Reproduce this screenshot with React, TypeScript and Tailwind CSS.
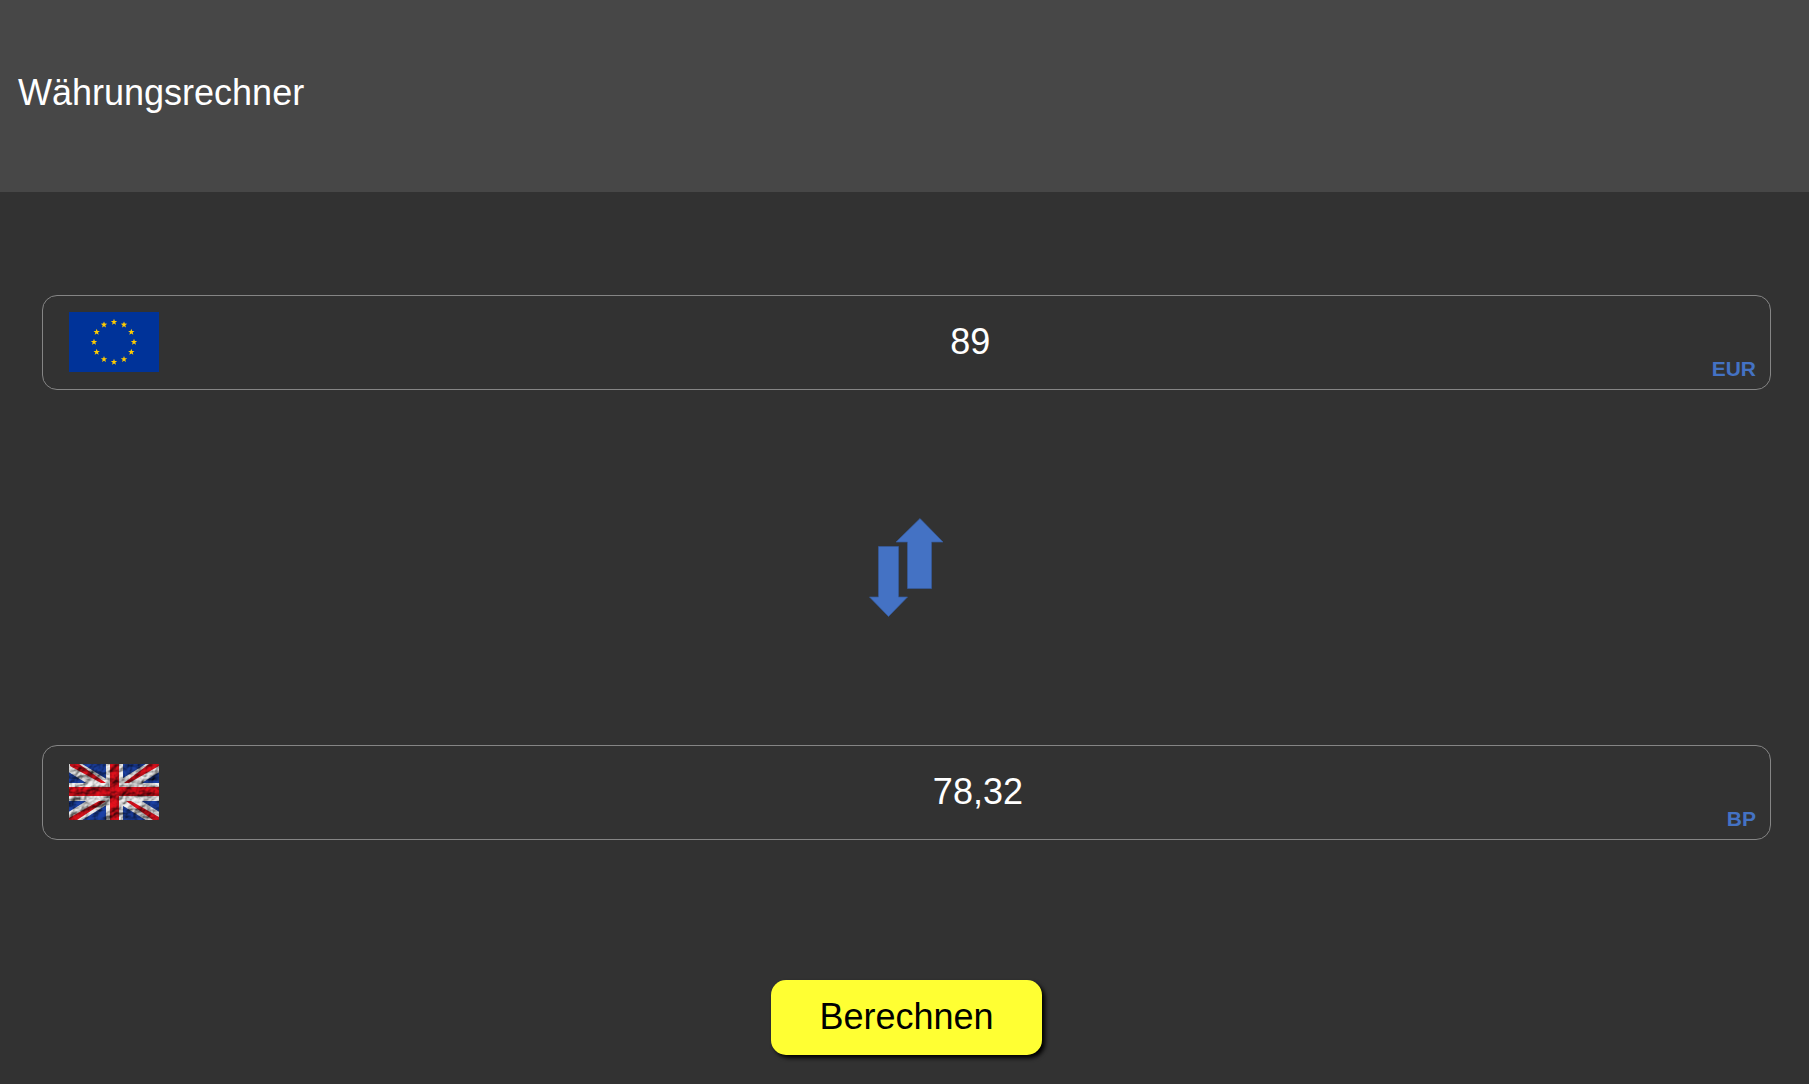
import { useState, type ReactNode } from "react";

const STAR = "0,-3.2 0.85,-1.1 3.2,-1.05 1.3,0.45 2,2.75 0,1.45 -2,2.75 -1.3,0.45 -3.2,-1.05 -0.85,-1.1";

function EuFlag() {
  return (
    <svg viewBox="0 0 90 60" className="h-[60px] w-[90px] shrink-0" role="img" aria-label="Europäische Union">
      <rect width="90" height="60" fill="#003399" />
      {Array.from({ length: 12 }, (_, i) => {
        const a = (i * Math.PI) / 6;
        return (
          <polygon
            key={i}
            points={STAR}
            fill="#ffcc00"
            transform={`translate(${45 + 20 * Math.sin(a)} ${30 - 20 * Math.cos(a)})`}
          />
        );
      })}
    </svg>
  );
}

function UkFlag() {
  return (
    <svg viewBox="0 0 90 56" className="h-14 w-[90px] shrink-0" role="img" aria-label="Vereinigtes Königreich">
      <defs>
        <filter id="crumple" x="0" y="0" width="100%" height="100%" colorInterpolationFilters="sRGB">
          <feTurbulence type="fractalNoise" baseFrequency="0.09 0.1" numOctaves="4" seed="8" result="noise" />
          <feDiffuseLighting in="noise" surfaceScale="3.6" lightingColor="#ffffff" diffuseConstant="1" result="light">
            <feDistantLight azimuth="235" elevation="52" />
          </feDiffuseLighting>
          <feBlend in="SourceGraphic" in2="light" mode="multiply" />
        </filter>
      </defs>
      <g filter="url(#crumple)">
        <rect width="90" height="56" fill="#1c42a8" />
        <path d="M0 0L90 56M90 0L0 56" stroke="#f2f2f2" strokeWidth="14" />
        <path d="M1 0h9L37 19h-5L1 2zM80 0h10v2L60 19h-5zM0 54L30 37h7L8 56H0zM90 56h-6L57 37h5L90 53z" fill="#e0101c" />
        <path d="M37 0h17v19h36v18H54v19H37V37H0V19h37z" fill="#f5f5f5" />
        <path d="M41 0h9v23h40v9H50v24h-9V32H0v-9h41z" fill="#e8101c" />
      </g>
    </svg>
  );
}

function SwapArrows() {
  return (
    <svg viewBox="0 0 75 99" className="h-[99px] w-[75px]" fill="#4472c4" stroke="#365b9d" strokeWidth="0.7" aria-hidden="true">
      <path d="M51 .5L74 24H62.500v46.500H38.500V24H27z" />
      <path d="M9.500 28.500h20V79h9L19.500 98.500.5 79h9z" />
    </svg>
  );
}

type FieldProps = {
  id: string;
  flag: ReactNode;
  currency: string;
  value: string;
  readOnly?: boolean;
  onChange?: (value: string) => void;
};

function CurrencyField({ id, flag, currency, value, readOnly, onChange }: FieldProps) {
  return (
    <div className="flex h-[95px] w-full items-center rounded-[15px] border border-[#858585] pr-[14px] pb-[2px] pl-[26px]">
      {flag}
      <input
        id={id}
        type="text"
        inputMode="decimal"
        value={value}
        readOnly={readOnly}
        onChange={(e) => onChange?.(e.target.value)}
        className="h-16 min-w-0 flex-1 bg-transparent pl-[70px] text-center text-4xl text-white outline-none"
      />
      <label htmlFor={id} className="mb-[6px] self-end text-[21px] leading-6 font-bold text-[#4472c4]">
        {currency}
      </label>
    </div>
  );
}

const RATE = 0.88;

export default function App() {
  const [amount, setAmount] = useState("89");
  const [result, setResult] = useState("78,32");
  const [inverted, setInverted] = useState(false);

  const calculate = () => {
    const n = Number(amount.replace(",", "."));
    if (Number.isNaN(n)) return;
    setResult((inverted ? n / RATE : n * RATE).toFixed(2).replace(".", ","));
  };

  const swap = () => {
    setInverted(!inverted);
    setAmount(result);
    setResult(amount);
  };

  return (
    <div className="min-h-screen bg-[#323232] font-['Liberation_Sans',Arial,sans-serif]">
      <header className="flex h-48 items-center bg-[#474747] px-[18px]">
        <h1 className="pb-[6px] text-4xl text-white">Währungsrechner</h1>
      </header>
      <main className="flex flex-col items-center pt-[103px] pr-[38px] pb-7 pl-[42px]">
        <CurrencyField
          id="amount"
          flag={inverted ? <UkFlag /> : <EuFlag />}
          currency={inverted ? "BP" : "EUR"}
          value={amount}
          onChange={setAmount}
        />
        <button type="button" onClick={swap} aria-label="Währungen tauschen" className="my-32 cursor-pointer">
          <SwapArrows />
        </button>
        <CurrencyField
          id="result"
          flag={inverted ? <EuFlag /> : <UkFlag />}
          currency={inverted ? "EUR" : "BP"}
          value={result}
          readOnly
        />
        <button
          type="button"
          onClick={calculate}
          className="mt-[140px] h-[75px] w-[271px] cursor-pointer rounded-[15px] bg-[#ffff33] pb-[2px] text-4xl text-black shadow-[3px_3px_4px_#000000]"
        >
          Berechnen
        </button>
      </main>
    </div>
  );
}
